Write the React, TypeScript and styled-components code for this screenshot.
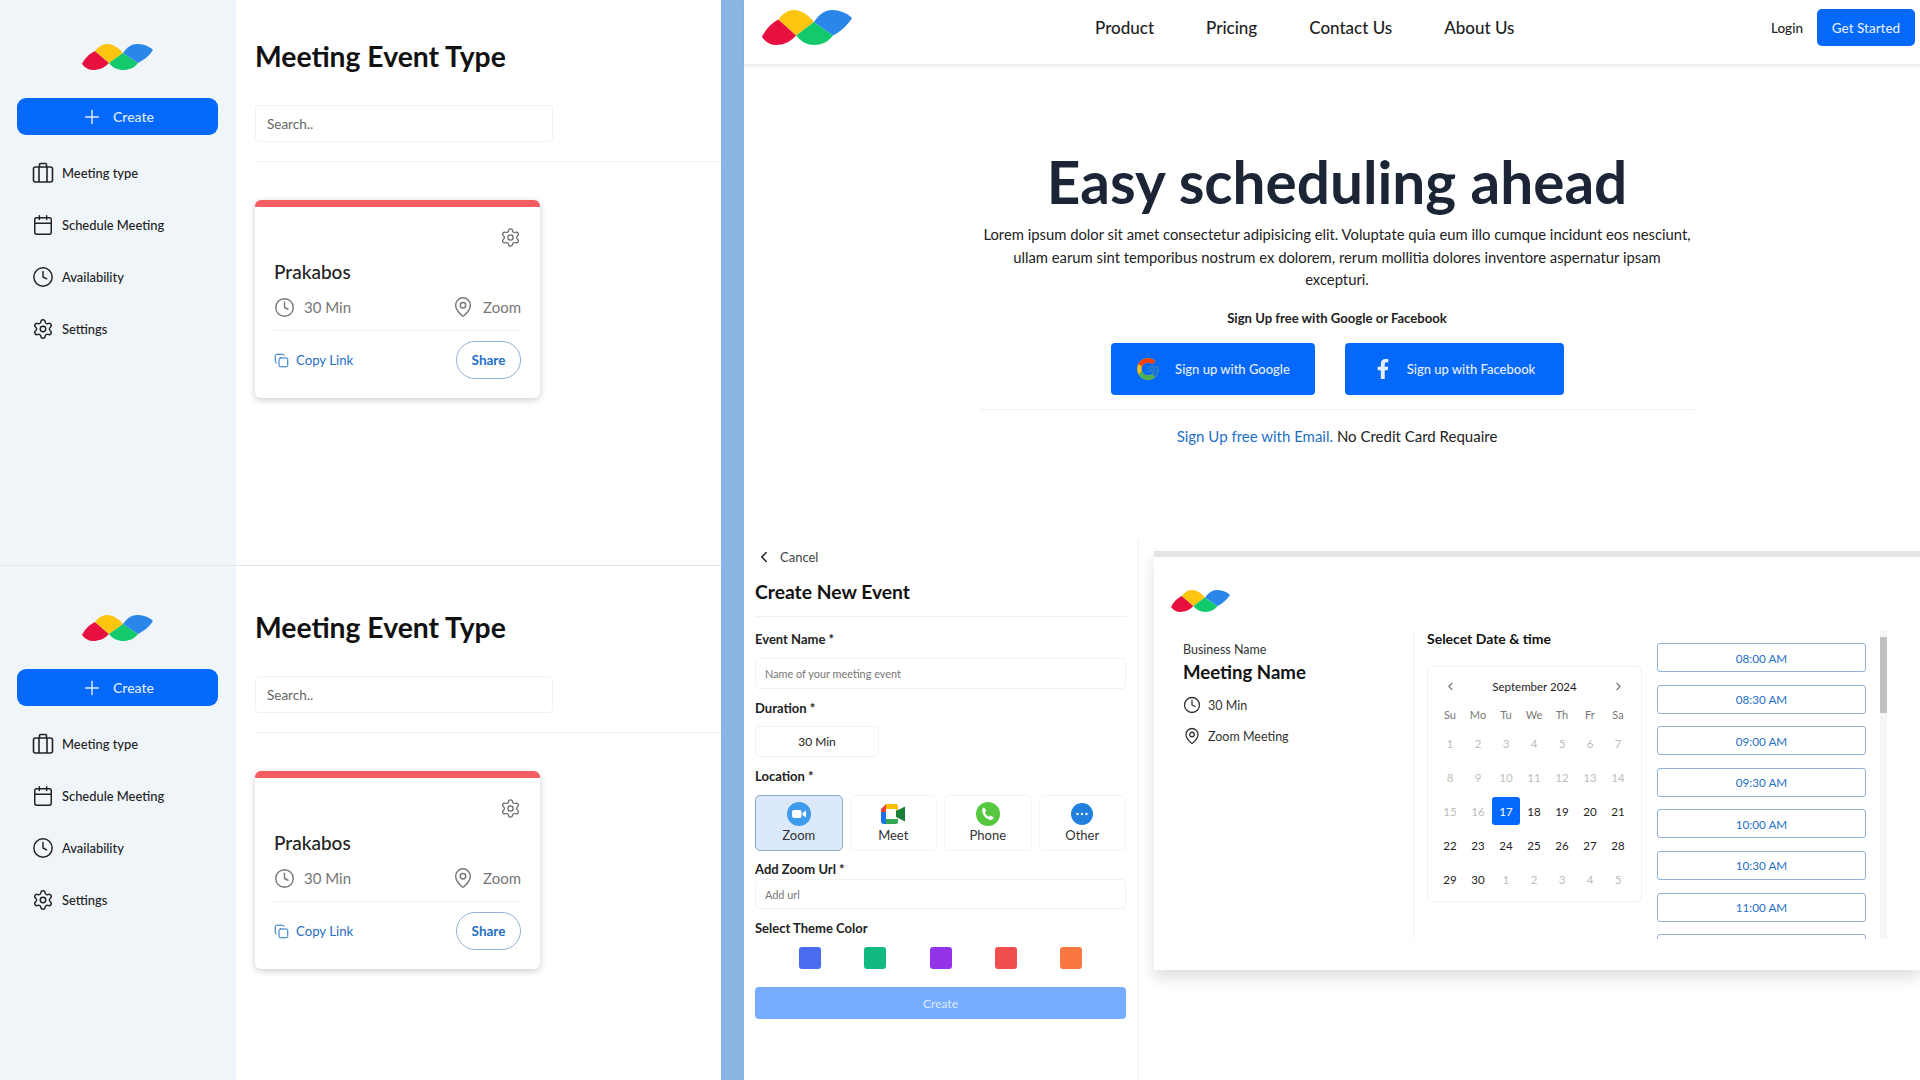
import styled, { createGlobalStyle } from "styled-components";
import { Calendar, ChevronLeft, ChevronRight, Clock, Copy, MapPin, Plus, Settings } from "lucide-react";
import { FaFacebookF } from "react-icons/fa";
import { FcGoogle } from "react-icons/fc";

const GlobalStyle = createGlobalStyle`
  * { box-sizing: border-box; }
  html, body { margin: 0; padding: 0; background: #fff; }
  body { font-family: Lato, "Noto Sans", sans-serif; color: #111; overflow: hidden; }
`;

const primary = "#0469fa";
const linkBlue = "#1f6fc4";

const Logo = ({ w, h }: { w: number; h: number }) => (
  <svg width={w} height={h} viewBox="0 0 71 26" preserveAspectRatio="none" style={{ display: "block" }}>
    <path d="M0 20 C3 14 7 10 13 7 L27 19 C22 24 17 26 11 26 C7 26 3 24 0 20Z" fill="#e8103f" />
    <path d="M13 7 C17 2 21 0 25 0 C31 0 37 4 41 9 L27 19Z" fill="#fdc50f" />
    <path d="M27 19 L41 9 L56 19 C52 24 47 26 41 26 C36 26 31 24 27 19Z" fill="#12c96c" />
    <path d="M41 9 C45 3 50 0 55 0 C61 0 67 2 71 6 C67 12 62 16 56 19Z" fill="#2b86ea" />
  </svg>
);

const BagIcon = () => (
  <svg width="22" height="22" viewBox="0 0 22 22" fill="none" stroke="#222" strokeWidth="1.6" strokeLinejoin="round">
    <rect x="1.5" y="5" width="19" height="15" rx="2" />
    <path d="M7 20V5M15 20V5M7.5 5V2.5a1 1 0 0 1 1-1h5a1 1 0 0 1 1 1V5" />
  </svg>
);

const ZoomIcon = () => (
  <svg width="24" height="24" viewBox="0 0 24 24">
    <circle cx="12" cy="12" r="12" fill="#3f9bec" />
    <rect x="5" y="8" width="9.5" height="8" rx="2" fill="#fff" />
    <path d="M15.5 11l3.5-2.6v7.2L15.5 13z" fill="#fff" />
  </svg>
);

const MeetIcon = () => (
  <svg width="24" height="20" viewBox="0 0 24 20">
    <path d="M5 0h10v5H5v3H0V5z" fill="#ea4335" />
    <path d="M5 0h10a2 2 0 0 1 2 2v4l-2 1V5H5z" fill="#fbbc04" />
    <path d="M0 8h5v7h-5z" fill="#1a73e8" />
    <path d="M0 15h5v0h10v5H3a3 3 0 0 1-3-3z" fill="#1a73e8" />
    <path d="M15 15h2v3a2 2 0 0 1-2 2h-1v-5z" fill="#34a853" />
    <path d="M15 7l2-1 7-3.5v15L17 14l-2-1z" fill="#188038" />
    <rect x="5" y="5" width="10" height="10" fill="#fff" />
    <path d="M5 15h10v5H5z" fill="#34a853" />
  </svg>
);

const PhoneIcon = () => (
  <svg width="24" height="24" viewBox="0 0 24 24">
    <circle cx="12" cy="12" r="12" fill="#55c83f" />
    <path
      d="M8.2 5.6l2 3.3-1.3 1.5c.8 1.8 2.2 3.3 4.2 4.3l1.5-1.3 3.2 2c-.4 1.5-1.5 2.5-3 2.5C10 17.600 6 12.500 6.200 8c.1-1.300 1-2.200 2-2.400z"
      fill="#fff"
    />
  </svg>
);

const OtherIcon = () => (
  <svg width="22" height="22" viewBox="0 0 22 22">
    <circle cx="11" cy="11" r="11" fill="#2180de" />
    <circle cx="6.500" cy="11" r="1.200" fill="#fff" />
    <circle cx="11" cy="11" r="1.200" fill="#fff" />
    <circle cx="15.500" cy="11" r="1.200" fill="#fff" />
  </svg>
);

const navItems = [
  { label: "Meeting type", icon: <BagIcon /> },
  { label: "Schedule Meeting", icon: <Calendar size={22} strokeWidth={1.6} color="#222" /> },
  { label: "Availability", icon: <Clock size={22} strokeWidth={1.6} color="#222" /> },
  { label: "Settings", icon: <Settings size={22} strokeWidth={1.6} color="#222" /> },
];

const EventPane = ({ $top }: { $top: number }) => (
  <Pane>
    <Sidebar $top={$top}>
      <LogoRow>
        <Logo w={71} h={26} />
      </LogoRow>
      <CreateButton>
        <Plus size={22} strokeWidth={1.6} />
        Create
      </CreateButton>
      <SideNav>
        {navItems.map((item) => (
          <SideItem key={item.label}>
            {item.icon}
            {item.label}
          </SideItem>
        ))}
      </SideNav>
    </Sidebar>
    <PaneMain $top={$top}>
      <PageTitle>Meeting Event Type</PageTitle>
      <SearchBox>Search..</SearchBox>
      <PaneRule />
      <EventCard>
        <CardBar />
        <CardBody>
          <GearRow>
            <Settings size={21} strokeWidth={1.4} color="#666" />
          </GearRow>
          <CardName>Prakabos</CardName>
          <MetaRow>
            <Meta>
              <Clock size={21} strokeWidth={1.6} />
              30 Min
            </Meta>
            <Meta>
              <MapPin size={22} strokeWidth={1.6} />
              Zoom
            </Meta>
          </MetaRow>
          <CardRule />
          <ActionRow>
            <CopyLink>
              <Copy size={15} strokeWidth={1.6} />
              Copy Link
            </CopyLink>
            <ShareButton>Share</ShareButton>
          </ActionRow>
        </CardBody>
      </EventCard>
    </PaneMain>
  </Pane>
);

const TopNav = () => (
  <NavBar>
    <Logo w={90} h={35} />
    <NavLinks>
      <NavLink>Product</NavLink>
      <NavLink>Pricing</NavLink>
      <NavLink>Contact Us</NavLink>
      <NavLink>About Us</NavLink>
    </NavLinks>
    <NavRight>
      <LoginLink>Login</LoginLink>
      <StartedButton>Get Started</StartedButton>
    </NavRight>
  </NavBar>
);

const Hero = () => (
  <HeroSection>
    <HeroTitle>Easy scheduling ahead</HeroTitle>
    <HeroText>
      Lorem ipsum dolor sit amet consectetur adipisicing elit. Voluptate quia eum illo cumque incidunt eos nesciunt,
      <br />
      ullam earum sint temporibus nostrum ex dolorem, rerum mollitia dolores inventore aspernatur ipsam
      <br />
      excepturi.
    </HeroText>
    <HeroSub>Sign Up free with Google or Facebook</HeroSub>
    <SocialRow>
      <SocialButton $w={204}>
        <FcGoogle size={26} />
        Sign up with Google
      </SocialButton>
      <SocialButton $w={219}>
        <FaFacebookF size={20} />
        Sign up with Facebook
      </SocialButton>
    </SocialRow>
    <HeroRule />
    <EmailLine>
      <a>Sign Up free with Email.</a> No Credit Card Requaire
    </EmailLine>
  </HeroSection>
);

const locations = [
  { label: "Zoom", icon: <ZoomIcon />, active: true },
  { label: "Meet", icon: <MeetIcon />, active: false },
  { label: "Phone", icon: <PhoneIcon />, active: false },
  { label: "Other", icon: <OtherIcon />, active: false },
];

const swatches = ["#4a6cf0", "#12b981", "#9333ea", "#f04e4e", "#f97740"];

const CreateForm = () => (
  <FormColumn>
    <CancelRow>
      <ChevronLeft size={18} strokeWidth={2} color="#222" />
      Cancel
    </CancelRow>
    <FormTitle>Create New Event</FormTitle>
    <FormRule />
    <Label $mt={14}>Event Name *</Label>
    <FormInput $mt={11} $h={31}>Name of your meeting event</FormInput>
    <Label $mt={11}>Duration *</Label>
    <DurationBox>30 Min</DurationBox>
    <Label $mt={11}>Location *</Label>
    <LocationGrid>
      {locations.map((loc) => (
        <LocationTile key={loc.label} $active={loc.active}>
          <TileIcon>{loc.icon}</TileIcon>
          {loc.label}
        </LocationTile>
      ))}
    </LocationGrid>
    <Label $mt={10}>Add Zoom Url *</Label>
    <FormInput $mt={2} $h={30}>Add url</FormInput>
    <Label $mt={11}>Select Theme Color</Label>
    <SwatchRow>
      {swatches.map((c) => (
        <Swatch key={c} $color={c} />
      ))}
    </SwatchRow>
    <SubmitButton>Create</SubmitButton>
  </FormColumn>
);

const weekdays = ["Su", "Mo", "Tu", "We", "Th", "Fr", "Sa"];

const days = [
  ...Array.from({ length: 16 }, (_, i) => ({ n: i + 1, muted: true })),
  ...Array.from({ length: 14 }, (_, i) => ({ n: i + 17, muted: false })),
  ...Array.from({ length: 5 }, (_, i) => ({ n: i + 1, muted: true })),
];

// the last slot is scrolled almost out of view, only its top edge shows
const slots = ["08:00 AM", "08:30 AM", "09:00 AM", "09:30 AM", "10:00 AM", "10:30 AM", "11:00 AM", ""];

const BookingCard = () => (
  <BookingColumn>
    <Booking>
      <BookingBar />
      <BookingLogo>
        <Logo w={59} h={22} />
      </BookingLogo>
      <BookingBody>
        <MeetingInfo>
          <BusinessName>Business Name</BusinessName>
          <MeetingName>Meeting Name</MeetingName>
          <InfoLine $mt={11}>
            <Clock size={18} strokeWidth={1.7} />
            30 Min
          </InfoLine>
          <InfoLine $mt={11}>
            <MapPin size={18} strokeWidth={1.7} />
            Zoom Meeting
          </InfoLine>
        </MeetingInfo>
        <DatePane>
          <DateTitle>Selecet Date &amp; time</DateTitle>
          <CalendarBox>
            <CalHeader>
              <ChevronLeft size={13} color="#777" />
              <span>September 2024</span>
              <ChevronRight size={13} color="#777" />
            </CalHeader>
            <WeekRow>
              {weekdays.map((d) => (
                <WeekDay key={d}>{d}</WeekDay>
              ))}
            </WeekRow>
            <DayGrid>
              {days.map((d, i) => (
                <DayCell key={i}>
                  <DayNum $muted={d.muted} $selected={d.n === 17 && !d.muted}>
                    {d.n}
                  </DayNum>
                </DayCell>
              ))}
            </DayGrid>
          </CalendarBox>
        </DatePane>
        <SlotList>
          {slots.map((s, i) => (
            <SlotButton key={i}>{s}</SlotButton>
          ))}
        </SlotList>
        <ScrollTrack>
          <ScrollThumb />
        </ScrollTrack>
      </BookingBody>
    </Booking>
  </BookingColumn>
);

export default function App() {
  return (
    <>
      <GlobalStyle />
      <Page>
        <LeftColumn>
          <EventPane $top={44} />
          <EventPane $top={49} />
        </LeftColumn>
        <Divider />
        <RightColumn>
          <TopNav />
          <Hero />
          <LowerRow>
            <CreateForm />
            <BookingCard />
          </LowerRow>
        </RightColumn>
      </Page>
    </>
  );
}

const Page = styled.div`
  display: grid;
  grid-template-columns: 721px 23px 1176px;
  width: 1920px;
  height: 1080px;
  overflow: hidden;
`;
const LeftColumn = styled.div`
  display: grid;
  grid-template-rows: 566px 514px;
`;
const Divider = styled.div`
  background: #8ab5e3;
`;
const RightColumn = styled.div`
  display: flex;
  flex-direction: column;
`;
const Pane = styled.section`
  display: grid;
  grid-template-columns: 236px 1fr;
  border-bottom: 1px solid #e2e4e8;
  &:last-child {
    border-bottom: 0;
  }
`;
const Sidebar = styled.aside<{ $top: number }>`
  background: #f0f5fa;
  padding: ${(p) => p.$top}px 18px 0 17px;
`;
const LogoRow = styled.div`
  display: flex;
  justify-content: center;
  height: 26px;
  margin-bottom: 28px;
`;
const CreateButton = styled.div`
  display: flex;
  align-items: center;
  justify-content: center;
  gap: 10px;
  height: 37px;
  background: ${primary};
  color: #dfeaff;
  border-radius: 9px;
  font-size: 14px;
  font-weight: 500;
`;
const SideNav = styled.nav`
  margin-top: 12px;
  padding-left: 15px;
`;
const SideItem = styled.div`
  display: flex;
  align-items: center;
  gap: 8px;
  height: 52px;
  font-size: 12.900px;
  font-weight: 500;
  color: #222;
`;
const PaneMain = styled.main<{ $top: number }>`
  padding: ${(p) => p.$top - 6}px 0 0 19px;
`;
const PageTitle = styled.h1`
  margin: 0;
  height: 36px;
  line-height: 36px;
  font-size: 28.300px;
  font-weight: 700;
  color: #111;
`;
const SearchBox = styled.div`
  margin-top: 31px;
  width: 298px;
  height: 37px;
  padding: 0 11px;
  display: flex;
  align-items: center;
  border: 1px solid #f1f2f4;
  border-radius: 4px;
  font-size: 13.500px;
  color: #666;
`;
const PaneRule = styled.hr`
  margin: 19px 0 0;
  border: 0;
  border-top: 1px solid #eef0f2;
`;
const EventCard = styled.article`
  margin-top: 38px;
  width: 285px;
  height: 198px;
  border-radius: 6px;
  overflow: hidden;
  background: #fff;
  box-shadow: 0 2px 7px rgba(0, 0, 0, 0.2);
`;
const CardBar = styled.div`
  height: 7px;
  background: #f45d62;
`;
const CardBody = styled.div`
  padding: 20px 19px 0;
`;
const GearRow = styled.div`
  display: flex;
  justify-content: flex-end;
  height: 20px;
`;
const CardName = styled.h3`
  margin: 13px 0 0;
  height: 24px;
  line-height: 24px;
  font-size: 19px;
  font-weight: 500;
  color: #222;
`;
const MetaRow = styled.div`
  display: flex;
  justify-content: space-between;
  margin-top: 11px;
`;
const Meta = styled.div`
  display: flex;
  align-items: center;
  gap: 9px;
  height: 24px;
  font-size: 15px;
  color: #777;
`;
const CardRule = styled.hr`
  margin: 11px 0 0;
  border: 0;
  border-top: 1px solid #eef0f2;
`;
const ActionRow = styled.div`
  display: flex;
  justify-content: space-between;
  align-items: center;
  margin-top: 10px;
`;
const CopyLink = styled.div`
  display: flex;
  align-items: center;
  gap: 7px;
  font-size: 13.200px;
  color: ${linkBlue};
`;
const ShareButton = styled.div`
  display: flex;
  align-items: center;
  justify-content: center;
  width: 65px;
  height: 38px;
  border: 1px solid #8fb1d6;
  border-radius: 19px;
  font-size: 13.500px;
  font-weight: 700;
  color: ${linkBlue};
`;
const NavBar = styled.header`
  display: flex;
  align-items: flex-start;
  height: 66px;
  padding: 10px 5px 0 18px;
  border-bottom: 2px solid #eceef0;
  box-shadow: 0 1px 3px rgba(0, 0, 0, 0.06);
`;
const NavLinks = styled.nav`
  display: flex;
  gap: 52px;
  margin: -1px 0 0 243px;
  height: 36px;
  align-items: center;
`;
const NavLink = styled.a`
  font-size: 17px;
  font-weight: 500;
  color: #222;
`;
const NavRight = styled.div`
  display: flex;
  align-items: center;
  gap: 14px;
  margin: -1px 0 0 auto;
`;
const LoginLink = styled.a`
  font-size: 13.500px;
  font-weight: 500;
  color: #222;
`;
const StartedButton = styled.div`
  display: flex;
  align-items: center;
  justify-content: center;
  width: 98px;
  height: 37px;
  border-radius: 5px;
  background: ${primary};
  color: #dfeaff;
  font-size: 13.500px;
  font-weight: 500;
`;
const HeroSection = styled.section`
  display: flex;
  flex-direction: column;
  align-items: center;
  height: 474px;
  padding: 81px 0 0 10px;
  flex: none;
`;
const HeroTitle = styled.h1`
  margin: 0;
  height: 68px;
  line-height: 68px;
  font-size: 58.500px;
  font-weight: 700;
  color: #1c2536;
`;
const HeroText = styled.p`
  margin: 8px 0 0;
  width: 760px;
  text-align: center;
  font-size: 14.800px;
  line-height: 22.500px;
  color: #222;
`;
const HeroSub = styled.div`
  margin-top: 18px;
  height: 18px;
  line-height: 18px;
  font-size: 13.100px;
  font-weight: 700;
  color: #222;
`;
const SocialRow = styled.div`
  display: flex;
  gap: 30px;
  margin-top: 16px;
`;
const SocialButton = styled.div<{ $w: number }>`
  display: flex;
  align-items: center;
  justify-content: center;
  gap: 14px;
  width: ${(p) => p.$w}px;
  height: 52px;
  border-radius: 4px;
  background: ${primary};
  color: #e4eeff;
  font-size: 13px;
  font-weight: 500;
`;
const HeroRule = styled.hr`
  margin: 14px 0 0;
  width: 715px;
  border: 0;
  border-top: 1px solid #eef0f2;
`;
const EmailLine = styled.div`
  margin-top: 16px;
  height: 20px;
  line-height: 20px;
  font-size: 15px;
  color: #222;
  a {
    color: ${linkBlue};
  }
`;
const LowerRow = styled.div`
  display: grid;
  grid-template-columns: 395px 1fr;
  flex: 1;
`;
const FormColumn = styled.div`
  display: flex;
  flex-direction: column;
  padding: 9px 12px 0 11px;
  border-right: 1px solid #eef0f2;
`;
const CancelRow = styled.div`
  display: flex;
  align-items: center;
  gap: 7px;
  height: 16px;
  margin-left: 0;
  font-size: 13px;
  color: #444;
`;
const FormTitle = styled.h2`
  margin: 15px 0 0;
  height: 24px;
  line-height: 24px;
  font-size: 19.300px;
  font-weight: 700;
  color: #111;
`;
const FormRule = styled.hr`
  margin: 12px 0 0;
  border: 0;
  border-top: 1px solid #f1f2f4;
`;
const Label = styled.label<{ $mt: number }>`
  display: block;
  margin-top: ${(p) => p.$mt}px;
  height: 16px;
  line-height: 16px;
  font-size: 13px;
  font-weight: 700;
  color: #222;
`;
const FormInput = styled.div<{ $mt: number; $h: number }>`
  display: flex;
  align-items: center;
  margin-top: ${(p) => p.$mt}px;
  height: ${(p) => p.$h}px;
  padding: 0 9px;
  border: 1px solid #f1f2f4;
  border-radius: 4px;
  font-size: 10.900px;
  color: #777;
`;
const DurationBox = styled.div`
  display: flex;
  align-items: center;
  justify-content: center;
  margin-top: 10px;
  width: 124px;
  height: 31px;
  border: 1px solid #f1f2f4;
  border-radius: 4px;
  font-size: 12px;
  color: #222;
`;
const LocationGrid = styled.div`
  display: grid;
  grid-template-columns: repeat(4, 1fr);
  gap: 7px;
  margin-top: 11px;
`;
const LocationTile = styled.div<{ $active: boolean }>`
  display: flex;
  flex-direction: column;
  align-items: center;
  height: 56px;
  padding-top: 6px;
  border: 1px solid ${(p) => (p.$active ? "#8fa9c8" : "#f3f4f6")};
  border-radius: 5px;
  background: ${(p) => (p.$active ? "#dbe9fb" : "#fff")};
  font-size: 13px;
  color: #333;
`;
const TileIcon = styled.div`
  display: flex;
  align-items: center;
  justify-content: center;
  height: 24px;
  margin-bottom: 1px;
`;
const SwatchRow = styled.div`
  display: flex;
  gap: 43.300px;
  margin-top: 11px;
  padding-left: 44px;
`;
const Swatch = styled.div<{ $color: string }>`
  width: 22px;
  height: 22px;
  border-radius: 3px;
  background: ${(p) => p.$color};
`;
const SubmitButton = styled.div`
  display: flex;
  align-items: center;
  justify-content: center;
  margin-top: 18px;
  height: 32px;
  border-radius: 4px;
  background: #77adff;
  color: #dce9ff;
  font-size: 12px;
`;
const BookingColumn = styled.div`
  padding: 11px 0 0 15px;
`;
const Booking = styled.div`
  height: 419px;
  background: #fff;
  box-shadow: 0 8px 14px rgba(0, 0, 0, 0.13);
`;
const BookingBar = styled.div`
  height: 6px;
  background: #e5e5e5;
`;
const BookingLogo = styled.div`
  padding: 33px 0 0 17px;
  height: 73px;
`;
const BookingBody = styled.div`
  display: flex;
  align-items: flex-start;
  height: 309px;
`;
const MeetingInfo = styled.div`
  width: 260px;
  height: 100%;
  padding: 12px 0 0 29px;
  border-right: 1px solid #f1f2f4;
`;
const BusinessName = styled.div`
  height: 16px;
  line-height: 16px;
  font-size: 12.500px;
  color: #333;
`;
const MeetingName = styled.div`
  margin-top: 2px;
  height: 24px;
  line-height: 24px;
  font-size: 18.600px;
  font-weight: 700;
  color: #111;
`;
const InfoLine = styled.div<{ $mt: number }>`
  display: flex;
  align-items: center;
  gap: 7px;
  margin-top: ${(p) => p.$mt}px;
  height: 20px;
  font-size: 12.500px;
  color: #333;
`;
const DatePane = styled.div`
  width: 228px;
  padding: 0 0 0 13px;
`;
const DateTitle = styled.div`
  margin-top: 1px;
  height: 16px;
  line-height: 16px;
  font-size: 14px;
  font-weight: 700;
  color: #111;
`;
const CalendarBox = styled.div`
  margin-top: 19px;
  width: 215px;
  height: 236px;
  padding: 8px 8px 0;
  border: 1px solid #f1f2f4;
  border-radius: 4px;
`;
const CalHeader = styled.div`
  display: flex;
  align-items: center;
  justify-content: space-between;
  height: 22px;
  padding: 0 8px;
  font-size: 11.500px;
  color: #222;
`;
const WeekRow = styled.div`
  display: grid;
  grid-template-columns: repeat(7, 28px);
  margin-top: 8px;
`;
const WeekDay = styled.div`
  height: 20px;
  line-height: 20px;
  text-align: center;
  font-size: 11px;
  color: #777;
`;
const DayGrid = styled.div`
  display: grid;
  grid-template-columns: repeat(7, 28px);
  grid-auto-rows: 34px;
  margin-top: 1px;
`;
const DayCell = styled.div`
  display: flex;
  align-items: center;
  justify-content: center;
`;
const DayNum = styled.span<{ $muted: boolean; $selected: boolean }>`
  display: flex;
  align-items: center;
  justify-content: center;
  width: 28px;
  height: 28px;
  border-radius: 3px;
  font-size: 11.500px;
  background: ${(p) => (p.$selected ? primary : "transparent")};
  color: ${(p) => (p.$selected ? "#fff" : p.$muted ? "#bdbdbd" : "#222")};
`;
const SlotList = styled.div`
  display: flex;
  flex-direction: column;
  gap: 12.600px;
  width: 209px;
  height: 309px;
  margin-left: 15px;
  padding-top: 13px;
  overflow: hidden;
`;
const SlotButton = styled.div`
  display: flex;
  align-items: center;
  justify-content: center;
  flex: none;
  height: 29px;
  border: 1.500px solid #8fb1d6;
  border-radius: 3px;
  font-size: 11.700px;
  color: ${linkBlue};
`;
const ScrollTrack = styled.div`
  margin: 0 0 0 14px;
  width: 7px;
  height: 309px;
  padding-top: 7px;
  background: #f5f5f5;
`;
const ScrollThumb = styled.div`
  height: 76px;
  background: #c1c1c1;
`;
